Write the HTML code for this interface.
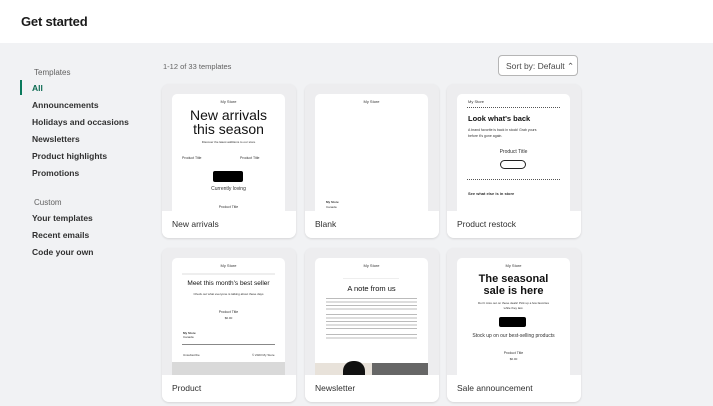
<!DOCTYPE html>
<html><head><meta charset="utf-8"><style>
*{margin:0;padding:0;box-sizing:border-box}
body{width:713px;height:406px;overflow:hidden;background:#f1f2f4;font-family:"Liberation Sans",sans-serif;color:#303030;position:relative}
.hdr{position:absolute;left:0;top:0;width:713px;height:43px;background:#fff}
.hdr h1{position:absolute;left:21px;top:14px;font-size:13px;font-weight:bold;color:#1a1a1a;letter-spacing:-0.2px}
.a{position:absolute;white-space:nowrap}
.sec{font-size:8px;color:#616161}
.it{font-size:8.5px;font-weight:bold;color:#303030}
.card{position:absolute;width:134px;height:154px;background:#ededef;border-radius:7px;box-shadow:0 1px 2px rgba(0,0,0,.12);overflow:hidden}
.band{position:absolute;left:0;top:127px;width:134px;height:27px;background:#fff}
.pv{position:absolute;left:10px;top:10px;width:113px;height:117px;background:#fff;border-radius:5px 5px 0 0;overflow:hidden}
.lab{position:absolute;left:10px;top:135px;font-size:8.5px;color:#303030}
.c{position:absolute;left:0;width:100%;text-align:center;white-space:nowrap}
.t{font-size:4px;color:#333}
</style></head><body>
<div class="hdr"><h1>Get started</h1></div>

<div class="a sec" style="left:34px;top:68px">Templates</div>
<div class="a" style="left:20px;top:80px;width:2px;height:15px;background:#0a7a5c"></div>
<div class="a it" style="left:32px;top:83px;color:#0b6a51">All</div>
<div class="a it" style="left:32px;top:100px">Announcements</div>
<div class="a it" style="left:32px;top:117px">Holidays and occasions</div>
<div class="a it" style="left:32px;top:134px">Newsletters</div>
<div class="a it" style="left:32px;top:151px">Product highlights</div>
<div class="a it" style="left:32px;top:168px">Promotions</div>
<div class="a sec" style="left:34px;top:198px">Custom</div>
<div class="a it" style="left:32px;top:213px">Your templates</div>
<div class="a it" style="left:32px;top:230px">Recent emails</div>
<div class="a it" style="left:32px;top:247px">Code your own</div>

<div class="a" style="left:163px;top:62px;font-size:7.5px;color:#616161">1-12 of 33 templates</div>
<div class="a" style="left:498px;top:55px;width:80px;height:21px;border:1px solid #b5b5b5;border-radius:4px;background:#fff;font-size:8.5px;color:#4a4a4a;padding:5px 0 0 7px">Sort by: Default ⌃</div>

<!-- row 1 -->
<div class="card" style="left:162px;top:84px"><div class="band"></div><div class="pv">
<div class="c t" style="top:5px">My Store</div>
<div class="c" style="top:14px;font-size:14px;line-height:14px;color:#111">New arrivals<br>this season</div>
<div class="c" style="top:46px;font-size:3px">Discover the latest additions to our store</div>
<div class="a t" style="left:10px;top:62px;font-size:3.5px">Product Title</div>
<div class="a t" style="left:68px;top:62px;font-size:3.5px">Product Title</div>
<div class="a" style="left:41px;top:77px;width:30px;height:11px;background:#000;border-radius:2px"></div>
<div class="c" style="top:92px;font-size:5px">Currently loving</div>
<div class="c t" style="top:111px;font-size:3.5px">Product Title</div>
</div><div class="lab">New arrivals</div></div>

<div class="card" style="left:305px;top:84px"><div class="band"></div><div class="pv">
<div class="c t" style="top:5px">My Store</div>
<div class="a" style="left:11px;top:106px;font-size:3px;font-weight:bold">My Store</div>
<div class="a" style="left:11px;top:111px;font-size:3px">Canada</div>
</div><div class="lab">Blank</div></div>

<div class="card" style="left:447px;top:84px"><div class="band"></div><div class="pv">
<div class="a t" style="left:11px;top:5px">My Store</div>
<div class="a" style="left:10px;top:13px;width:93px;height:1px;border-top:1px dotted #555"></div>
<div class="a" style="left:11px;top:20px;font-size:7.5px;font-weight:bold;color:#111">Look what's back</div>
<div class="a t" style="left:11px;top:33px;font-size:3.5px;line-height:6px">A brand favorite is back in stock! Grab yours<br>before it's gone again.</div>
<div class="c" style="top:55px;font-size:5px">Product Title</div>
<div class="a" style="left:43px;top:66px;width:26px;height:9px;border:1px solid #222;border-radius:5px"></div>
<div class="a" style="left:10px;top:85px;width:93px;height:1px;border-top:1px dotted #555"></div>
<div class="a" style="left:11px;top:97px;font-size:4px;font-weight:bold">See what else is in store</div>
</div><div class="lab">Product restock</div></div>

<!-- row 2 -->
<div class="card" style="left:162px;top:248px"><div class="band"></div><div class="pv">
<div class="c t" style="top:5px">My Store</div>
<div class="a" style="left:10px;top:15px;width:93px;height:2px;background:#eee"></div>
<div class="c" style="top:22px;font-size:6.5px;color:#111">Meet this month's best seller</div>
<div class="c" style="top:34px;font-size:3px">Check out what everyone is talking about these days</div>
<div class="c t" style="top:52px;font-size:3.5px">Product Title</div>
<div class="c" style="top:58px;font-size:3px">$0.00</div>
<div class="a" style="left:11px;top:73px;font-size:3px;font-weight:bold">My Store</div>
<div class="a" style="left:11px;top:77px;font-size:3px">Canada</div>
<div class="a" style="left:10px;top:86px;width:93px;height:1px;background:#888"></div>
<div class="a" style="left:11px;top:95px;font-size:3px">Unsubscribe</div>
<div class="a" style="left:80px;top:95px;font-size:3px">© 2023 My Store</div>
<div class="a" style="left:0;top:104px;width:113px;height:14px;background:#d9d9d9"></div>
</div><div class="lab">Product</div></div>

<div class="card" style="left:305px;top:248px"><div class="band"></div><div class="pv">
<div class="c t" style="top:5px">My Store</div>
<div class="a" style="left:28px;top:20px;width:56px;height:1px;background:#eee"></div>
<div class="c" style="top:26px;font-size:7.5px;color:#111">A note from us</div>
<div class="a" style="left:11px;top:40px;width:91px;height:12px;background:repeating-linear-gradient(#bbb 0 1px,transparent 1px 3.5px)"></div>
<div class="a" style="left:11px;top:56px;width:91px;height:17px;background:repeating-linear-gradient(#bbb 0 1px,transparent 1px 3.5px)"></div>
<div class="a" style="left:11px;top:76px;width:91px;height:6px;background:repeating-linear-gradient(#bbb 0 1px,transparent 1px 3.5px)"></div>
<div class="a" style="left:0;top:105px;width:57px;height:13px;background:#e8e2da"></div>
<div class="a" style="left:28px;top:103px;width:22px;height:20px;background:#111;border-radius:10px 10px 0 0"></div>
<div class="a" style="left:57px;top:105px;width:56px;height:13px;background:#666"></div>
</div><div class="lab">Newsletter</div></div>

<div class="card" style="left:447px;top:248px"><div class="band"></div><div class="pv">
<div class="c t" style="top:5px">My Store</div>
<div class="c" style="top:15px;font-size:11px;line-height:12px;font-weight:bold;color:#111">The seasonal<br>sale is here</div>
<div class="c" style="top:43px;font-size:3px;line-height:5px">Don't miss out on these deals! Pick up a few favorites<br>while they last.</div>
<div class="a" style="left:42px;top:59px;width:27px;height:10px;background:#000;border-radius:2px"></div>
<div class="c" style="top:75px;font-size:5px">Stock up on our best-selling products</div>
<div class="c t" style="top:93px;font-size:3.5px">Product Title</div>
<div class="c" style="top:99px;font-size:3px">$0.00</div>
</div><div class="lab">Sale announcement</div></div>
</body></html>
